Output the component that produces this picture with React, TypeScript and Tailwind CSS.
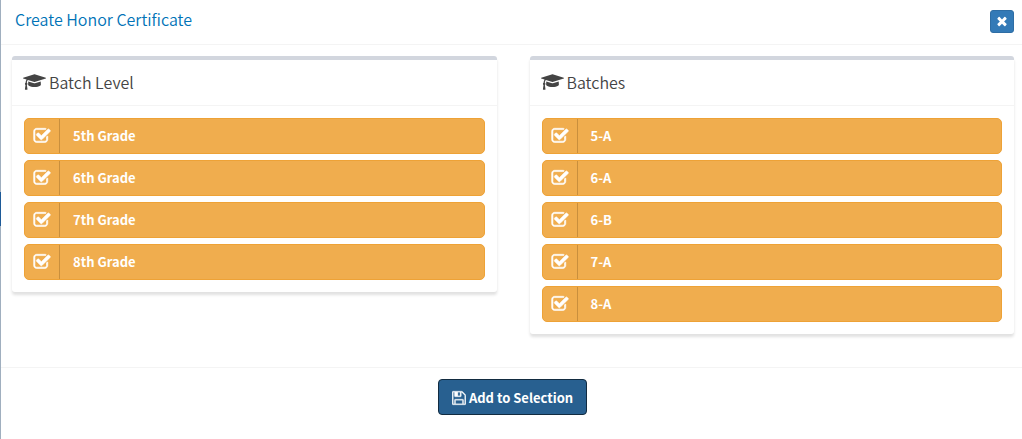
import { useState } from "react";

type IconProps = { className?: string };

const CapIcon = ({ className }: IconProps) => (
  <svg viewBox="0 0 2304 1792" className={className} fill="currentColor" aria-hidden="true">
    <path d="M1774 836l18 316q4 69-82 128t-235 93.5-323 34.5-323-34.5-235-93.5-82-128l18-316 574 181q22 7 48 7t48-7zm530-324q0 23-22 31l-1120 352q-4 1-10 1t-10-1l-652-206q-43 34-71 111.5t-34 178.5q63 36 63 109 0 69-58 107l58 433q2 14-8 25-9 11-24 11h-192q-15 0-24-11-10-11-8-25l58-433q-58-38-58-107 0-73 65-111 11-207 98-330l-333-104q-22-8-22-31t22-31l1120-352q4-1 10-1t10 1l1120 352q22 8 22 31z" />
  </svg>
);

const CheckIcon = ({ className, checked }: IconProps & { checked: boolean }) => (
  <svg viewBox="0 0 1792 1792" className={className} fill="currentColor" stroke="currentColor" strokeWidth="60" aria-hidden="true">
    <path d="M1472 930v318q0 119-84.5 203.5t-203.5 84.5h-832q-119 0-203.5-84.5t-84.5-203.5v-832q0-119 84.5-203.5t203.5-84.5h832q63 0 117 25 15 7 18 23 3 17-9 29l-49 49q-10 10-23 10-3 0-9-2-23-6-45-6h-832q-66 0-113 47t-47 113v832q0 66 47 113t113 47h832q66 0 113-47t47-113v-254q0-13 9-22l64-64q10-10 23-10 6 0 12 3 20 8 20 29z" />
    {checked && (
      <path d="M1703 441l-814 814q-24 24-57 24t-57-24l-430-430q-24-24-24-57t24-57l110-110q24-24 57-24t57 24l263 263 647-647q24-24 57-24t57 24l110 110q24 24 24 57t-24 57z" />
    )}
  </svg>
);

const SaveIcon = ({ className }: IconProps) => (
  <svg viewBox="128 0 1536 1792" className={className} fill="currentColor" stroke="currentColor" strokeWidth="30" aria-hidden="true">
    <path d="M512 1536h768v-384h-768v384zm896 0h128v-896q0-14-10-38.5t-20-34.5l-281-281q-10-10-34-20t-39-10v416q0 40-28 68t-68 28h-576q-40 0-68-28t-28-68v-416h-128v1280h128v-416q0-40 28-68t68-28h832q40 0 68 28t28 68v416zm-384-928v-320q0-13-9.5-22.5t-22.5-9.5h-192q-13 0-22.5 9.5t-9.5 22.5v320q0 13 9.5 22.5t22.5 9.5h192q13 0 22.5-9.5t9.5-22.5zm640 32v928q0 40-28 68t-68 28h-1344q-40 0-68-28t-28-68v-1344q0-40 28-68t68-28h928q40 0 88 20t76 48l280 280q28 28 48 76t20 88z" />
  </svg>
);

const CloseIcon = ({ className }: IconProps) => (
  <svg viewBox="0 0 1792 1792" className={className} fill="currentColor" aria-hidden="true">
    <path d="M1490 1322q0 40-28 68l-136 136q-28 28-68 28t-68-28l-294-294-294 294q-28 28-68 28t-68-28l-136-136q-28-28-28-68t28-68l294-294-294-294q-28-28-28-68t28-68l136-136q28-28 68-28t68 28l294 294 294-294q28-28 68-28t68 28l136 136q28 28 28 68t-28 68l-294 294 294 294q28 28 28 68z" />
  </svg>
);

function Option({ label }: { label: string }) {
  const [checked, setChecked] = useState(true);
  return (
    <label className="flex h-9 cursor-pointer overflow-hidden rounded-[5px] border border-[#eea236] bg-[#f0ad4e] text-white has-focus-visible:outline-2">
      <input
        type="checkbox"
        className="sr-only"
        checked={checked}
        onChange={(e) => setChecked(e.target.checked)}
      />
      <span className="flex w-[35px] items-center border-r border-[#c98f3d] pl-2">
        <CheckIcon className="size-[18px]" checked={checked} />
      </span>
      <span className="flex items-center pl-[13px] text-[13px] leading-5 font-bold">{label}</span>
    </label>
  );
}

function Box({ title, items }: { title: string; items: string[] }) {
  return (
    <section className="min-w-0 flex-1 rounded-[3px] border-t-4 border-[#d2d6de] bg-white shadow-[0_3px_3px_rgba(0,0,0,0.12)]">
      <h2 className="flex h-[46px] items-center gap-[3px] border-b border-[#f4f4f4] px-[11px] pb-0.5 text-base leading-5 font-[350] text-[#444]">
        <CapIcon className="h-[18px] w-[23px]" />
        {title}
      </h2>
      <div className="flex flex-col gap-1.5 p-3">
        {items.map((item) => (
          <Option key={item} label={item} />
        ))}
      </div>
    </section>
  );
}

export default function App() {
  return (
    <div className="flex min-h-screen bg-white font-['Noto_Sans_CJK_SC',sans-serif]">
      <div className="flex w-px flex-col bg-[#a0afbf]">
        <div className="h-48" />
        <div className="h-[34px] bg-[#1d5a98]" />
      </div>
      <main className="min-w-0 flex-1">
        <header className="flex h-[45px] items-center justify-between border-b border-[#f4f4f4] pr-2 pl-3.5">
          <h1 className="pb-1.5 text-base leading-5 font-[350] text-[#0073b7]">Create Honor Certificate</h1>
          <button
            type="button"
            aria-label="Close"
            className="mb-0.5 flex h-[23px] w-6 items-center justify-center rounded-[3px] border border-[#2e6da4] bg-[#337ab7] text-white"
          >
            <CloseIcon className="size-3.5" />
          </button>
        </header>
        <div className="flex items-start gap-[33px] pt-[11px] pr-2 pb-[33px] pl-[11px]">
          <Box title="Batch Level" items={["5th Grade", "6th Grade", "7th Grade", "8th Grade"]} />
          <Box title="Batches" items={["5-A", "6-A", "6-B", "7-A", "8-A"]} />
        </div>
        <footer className="flex justify-center border-t border-[#f4f4f4] py-[11px] pl-0.5">
          <button
            type="button"
            className="flex h-9 items-center gap-[3px] rounded border border-[#122b40] bg-[#286090] px-[13px] pt-0.5 text-[13px] leading-5 font-bold text-white"
          >
            <SaveIcon className="h-4 w-3.5" />
            Add to Selection
          </button>
        </footer>
      </main>
    </div>
  );
}
